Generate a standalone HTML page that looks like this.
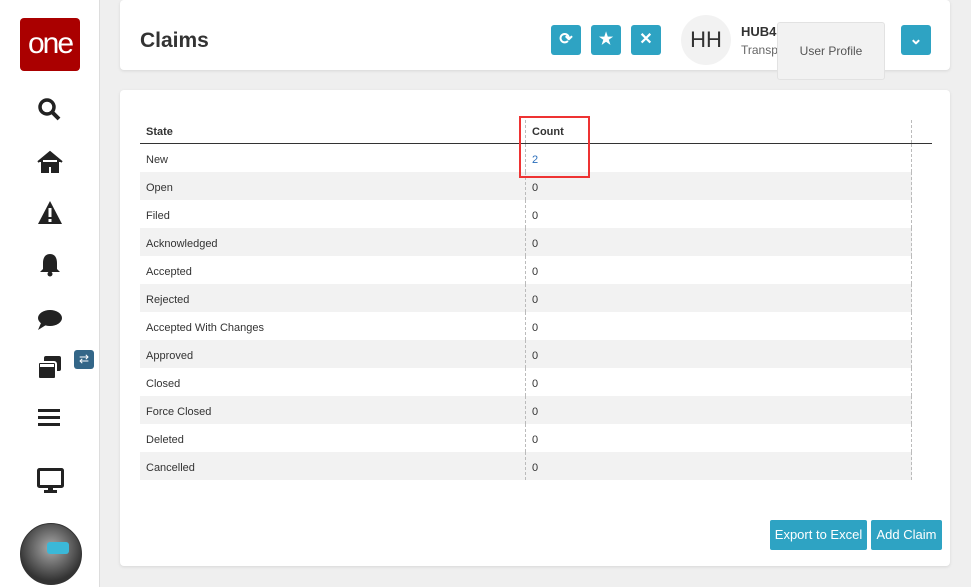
<!DOCTYPE html><html><head><style>
body{margin:0;width:971px;height:587px;background:#efefef;font-family:"Liberation Sans",sans-serif;position:relative;overflow:hidden}
.side{position:absolute;left:0;top:0;width:99px;height:587px;background:#fff;border-right:1px solid #ddd}
.ic{position:absolute;left:37px}
.card{position:absolute;background:#fff;border-radius:4px;box-shadow:0 1px 3px rgba(0,0,0,.1)}
.btn{position:absolute;top:25px;width:30px;height:30px;background:#2ea3c3;border-radius:3px;color:#fff;text-align:center;line-height:30px;font-weight:bold}
table{position:absolute;left:140px;top:120px;width:792px;border-collapse:collapse;font-size:11px;color:#333}
td{height:24px;padding:4px 6px 0;box-sizing:content-box}
tr:nth-child(odd) td{background:#f2f2f2}
tr.h td{background:#fff;font-weight:bold;height:23px;padding:0 6px;border-bottom:1px solid #333}
td.c{border-left:1px dashed #bbb;width:373px}
td.e{border-left:1px dashed #bbb;width:8px;background:#fff!important}
.b2{position:absolute;top:520px;height:30px;background:#2ea3c3;color:#fff;font-size:13px;line-height:30px;text-align:center;border-radius:2px}
</style></head><body>
<div class="side">
<div style="position:absolute;left:20px;top:18px;width:60px;height:53px;background:#a00;border-radius:4px;color:#fff;font-size:30px;text-align:center;line-height:52px;letter-spacing:-2px;font-weight:300">one</div>
<svg class="ic" style="top:97px" width="26" height="26"><circle cx="10" cy="10" r="7" stroke="#222" stroke-width="3.5" fill="none"/><path d="M15 15l7 7" stroke="#222" stroke-width="4"/></svg>
<svg class="ic" style="top:150px" width="26" height="24"><path d="M1 12L13 2l12 10M5 10v12h6v-6h4v6h6V10" fill="#222" stroke="#222" stroke-width="2"/></svg>
<svg class="ic" style="top:200px" width="26" height="26"><path d="M13 1L25 24H1z" fill="#222"/><rect x="11.5" y="8" width="3" height="9" fill="#fff"/><rect x="11.5" y="19" width="3" height="3" fill="#fff"/></svg>
<svg class="ic" style="top:252px" width="26" height="26"><path d="M13 2c-5 0-7 4-7 9v6l-3 3h20l-3-3v-6c0-5-2-9-7-9z" fill="#222"/><circle cx="13" cy="22" r="2.5" fill="#222"/></svg>
<svg class="ic" style="top:308px" width="26" height="24"><ellipse cx="13" cy="10" rx="12" ry="8" fill="#222"/><path d="M4 15l-3 7 8-5z" fill="#222"/></svg>
<svg class="ic" style="top:355px" width="26" height="26"><rect x="7" y="1" width="17" height="15" rx="2" fill="#222"/><rect x="1" y="7" width="18" height="17" rx="2" fill="#222" stroke="#fff" stroke-width="2"/><rect x="3" y="9" width="14" height="3" fill="#fff"/></svg>
<div style="position:absolute;left:74px;top:350px;width:20px;height:19px;background:#336688;border-radius:3px;color:#fff;font-size:12px;text-align:center;line-height:19px">⇄</div>
<svg class="ic" style="top:407px" width="26" height="22"><rect x="1" y="2" width="22" height="3" fill="#222"/><rect x="1" y="9" width="22" height="3" fill="#222"/><rect x="1" y="16" width="22" height="3" fill="#222"/></svg>
<svg class="ic" style="top:468px" width="28" height="26"><rect x="1.5" y="1.5" width="24" height="17" rx="1" stroke="#222" stroke-width="3" fill="none"/><rect x="11" y="19" width="5" height="4" fill="#222"/><rect x="7" y="22" width="13" height="3" fill="#222"/></svg>
<div style="position:absolute;left:20px;top:523px;width:60px;height:60px;border-radius:50%;background:radial-gradient(circle at 50% 40%,#aaa,#333 70%);border:1px solid #333"><div style="position:absolute;left:26px;top:18px;width:22px;height:12px;background:#3bb8d8;border-radius:3px"></div></div>
</div>
<div class="card" style="left:120px;top:0;width:830px;height:70px">
<div style="position:absolute;left:20px;top:29px;font-size:21px;font-weight:bold;color:#333">Claims</div>
</div>
<div class="btn" style="left:551px">⟳</div>
<div class="btn" style="left:591px">★</div>
<div class="btn" style="left:631px">✕</div>
<div style="position:absolute;left:681px;top:15px;width:50px;height:50px;border-radius:50%;background:#f2f2f2;font-size:22px;color:#333;text-align:center;line-height:50px">HH</div>
<div style="position:absolute;left:741px;top:24px;font-size:13px;font-weight:bold;color:#333">HUB4</div>
<div style="position:absolute;left:741px;top:43px;font-size:12px;color:#666">Transp</div>
<div style="position:absolute;left:777px;top:22px;width:106px;height:56px;background:#f2f2f2;border:1px solid #e2e2e2;border-radius:3px;font-size:12px;color:#555;line-height:56px;text-align:center">User Profile</div>
<div class="btn" style="left:901px">⌄</div>
<div class="card" style="left:120px;top:90px;width:830px;height:476px"></div>
<table>
<tr class="h"><td>State</td><td class="c">Count</td><td class="e"></td></tr>
<tr><td>New</td><td class="c" style="color:#2a6ebb">2</td><td class="e"></td></tr>
<tr><td>Open</td><td class="c">0</td><td class="e"></td></tr>
<tr><td>Filed</td><td class="c">0</td><td class="e"></td></tr>
<tr><td>Acknowledged</td><td class="c">0</td><td class="e"></td></tr>
<tr><td>Accepted</td><td class="c">0</td><td class="e"></td></tr>
<tr><td>Rejected</td><td class="c">0</td><td class="e"></td></tr>
<tr><td>Accepted With Changes</td><td class="c">0</td><td class="e"></td></tr>
<tr><td>Approved</td><td class="c">0</td><td class="e"></td></tr>
<tr><td>Closed</td><td class="c">0</td><td class="e"></td></tr>
<tr><td>Force Closed</td><td class="c">0</td><td class="e"></td></tr>
<tr><td>Deleted</td><td class="c">0</td><td class="e"></td></tr>
<tr><td>Cancelled</td><td class="c">0</td><td class="e"></td></tr>
</table>
<div style="position:absolute;left:519px;top:116px;width:71px;height:62px;border:2px solid #e33;box-sizing:border-box"></div>
<div class="b2" style="left:770px;width:97px">Export to Excel</div>
<div class="b2" style="left:871px;width:71px">Add Claim</div>
</body></html>
